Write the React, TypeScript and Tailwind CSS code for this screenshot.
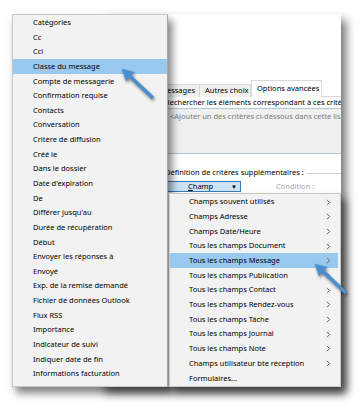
import React from "react";

const leftItems = [
  "Catégories",
  "Cc",
  "Cci",
  "Classe du message",
  "Compte de messagerie",
  "Confirmation requise",
  "Contacts",
  "Conversation",
  "Critère de diffusion",
  "Créé le",
  "Dans le dossier",
  "Date d'expiration",
  "De",
  "Différer jusqu'au",
  "Durée de récupération",
  "Début",
  "Envoyer les réponses à",
  "Envoyé",
  "Exp. de la remise demandé",
  "Fichier de données Outlook",
  "Flux RSS",
  "Importance",
  "Indicateur de suivi",
  "Indiquer date de fin",
  "Informations facturation",
  "Kilométrage",
];

const subItems = [
  { label: "Champs souvent utilisés", arrow: true },
  { label: "Champs Adresse", arrow: true },
  { label: "Champs Date/Heure", arrow: true },
  { label: "Tous les champs Document", arrow: true },
  { label: "Tous les champs Message", arrow: true },
  { label: "Tous les champs Publication", arrow: true },
  { label: "Tous les champs Contact", arrow: true },
  { label: "Tous les champs Rendez-vous", arrow: true },
  { label: "Tous les champs Tâche", arrow: true },
  { label: "Tous les champs Journal", arrow: true },
  { label: "Tous les champs Note", arrow: true },
  { label: "Champs utilisateur bte réception", arrow: true },
  { label: "Formulaires...", arrow: false },
];

function Chevron() {
  return (
    <svg width="5" height="7" viewBox="0 0 5 7" className="shrink-0">
      <path d="M1 0.8 L3.6 3.5 L1 6.2" fill="none" stroke="#555" strokeWidth="0.9" />
    </svg>
  );
}

export default function App() {
  return (
    <div
      className="relative w-[360px] h-[409px] bg-white overflow-hidden text-black"
      style={{ fontFamily: '"Noto Sans", "Open Sans", sans-serif' }}
    >
      {/* Dialog window */}
      <div className="absolute left-[100px] top-[14px] w-[241px] h-[373px] bg-white flex flex-col shadow-[5px_6px_9px_rgba(0,0,0,0.55)] text-[7.5px] leading-none">
        <div className="h-[67px] shrink-0" />
        {/* tabs */}
        <div className="h-[16px] shrink-0 flex items-end pl-[52px] border-b border-[#d9d9d9] whitespace-nowrap">
          <div className="h-[13px] w-[48px] bg-[#f0f0f0] border border-b-0 border-[#d9d9d9] flex items-center justify-end pr-[4px] -mb-px">
            Messages
          </div>
          <div className="h-[13px] w-[51px] bg-[#f0f0f0] border border-b-0 border-l-0 border-[#d9d9d9] flex items-center pl-[5px] -mb-px">
            Autres choix
          </div>
          <div className="h-[17px] w-[71px] bg-white border border-b-0 border-[#d9d9d9] flex items-center pl-[5px] -mb-px pb-[1px]">
            Options avancées
          </div>
        </div>
        <div className="h-[11px] shrink-0 flex items-center pl-[65px] whitespace-nowrap overflow-hidden">
          Rechercher les éléments correspondant à ces critères :
        </div>
        <div className="h-[46px] shrink-0 bg-[#f0f0f0] border-y border-[#b4c4d6] pl-[70px] pt-[4px] text-[#7a7a7a] whitespace-nowrap overflow-hidden">
          &lt;Ajouter un des critères ci-dessous dans cette liste&gt;
        </div>
        <div className="mt-[14px] flex items-center pl-[65px] whitespace-nowrap h-[10px]">
          <span>Définition de critères supplémentaires :</span>
          <div className="flex-1 ml-[3px] border-t border-[#d0d0d0]" />
        </div>
        <div className="mt-[3px] flex items-center h-[11px] whitespace-nowrap">
          <div className="ml-[40px] w-[101px] h-[11px] bg-[#cce4f7] border border-[#3d7ab5] flex items-center">
            <span className="ml-[47px]">
              <span className="underline">C</span>hamp
            </span>
            <span className="ml-auto mr-[3px] text-[6px]">▼</span>
          </div>
          <span className="ml-[35px] text-[#a8a8a8]">Condition :</span>
        </div>
      </div>

      {/* Left context menu */}
      <div className="absolute left-[12px] top-[14px] w-[156px] h-[373px] bg-[#f2f2f2] border border-[#c8c8c8] border-r-[#a8a8a8] pt-[0.4px] overflow-hidden shadow-[4px_6px_8px_rgba(0,0,0,0.5)] text-[7.5px] leading-none">
        {leftItems.map((t, i) => (
          <div
            key={t}
            className={`h-[14.65px] flex items-center pl-[20px] whitespace-nowrap ${
              i === 3 ? "bg-[#99c9ef]" : ""
            }`}
          >
            {t}
          </div>
        ))}
      </div>

      {/* Submenu */}
      <div className="absolute left-[169px] top-[193px] w-[172px] h-[194px] bg-[#f2f2f2] border border-[#c8c8c8] pt-[0.7px] shadow-[5px_6px_8px_rgba(0,0,0,0.5)] text-[7.5px] leading-none">
        {subItems.map((it, i) => (
          <div
            key={it.label}
            className={`h-[14.69px] flex items-center pl-[19px] pr-[7px] mr-[2px] whitespace-nowrap ${
              i === 4 ? "bg-[#99c9ef]" : ""
            }`}
          >
            <span className="flex-1">{it.label}</span>
            {it.arrow && <Chevron />}
          </div>
        ))}
      </div>

      {/* Arrows */}
      <svg
        className="absolute inset-0 pointer-events-none drop-shadow-[1px_2px_1.5px_rgba(0,0,0,0.45)]"
        width="360"
        height="409"
        viewBox="0 0 360 409"
      >
        <g fill="#4a8ed2" stroke="#4a8ed2">
          <line x1="153" y1="98" x2="129" y2="75.5" strokeWidth="3.6" />
          <polygon points="122,69 134.2,72.2 126,80.8" strokeWidth="0.5" />
          <line x1="346" y1="293" x2="322" y2="270.5" strokeWidth="3.6" />
          <polygon points="315,264 327.2,267.2 319,275.8" strokeWidth="0.5" />
        </g>
      </svg>
    </div>
  );
}
